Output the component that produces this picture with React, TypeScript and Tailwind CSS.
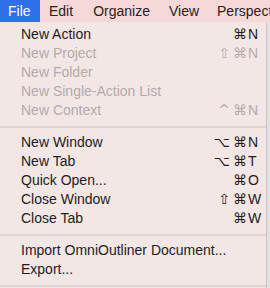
import React from "react";

type Item = { label: string; mods?: string[]; k?: string; disabled?: boolean } | "sep";

const items: Item[] = [
  { label: "New Action", mods: ["⌘"], k: "N" },
  { label: "New Project", mods: ["⇧", "⌘"], k: "N", disabled: true },
  { label: "New Folder", disabled: true },
  { label: "New Single-Action List", disabled: true },
  { label: "New Context", mods: ["^", "⌘"], k: "N", disabled: true },
  "sep",
  { label: "New Window", mods: ["⌥", "⌘"], k: "N" },
  { label: "New Tab", mods: ["⌥", "⌘"], k: "T" },
  { label: "Quick Open...", mods: ["⌘"], k: "O" },
  { label: "Close Window", mods: ["⇧", "⌘"], k: "W" },
  { label: "Close Tab", mods: ["⌘"], k: "W" },
  "sep",
  { label: "Import OmniOutliner Document..." },
  { label: "Export..." },
  "sep",
];

export default function App() {
  return (
    <div
      className="w-[270px] h-[288px] overflow-hidden bg-[#e9e6e6] flex flex-col"
      style={{ fontFamily: '"Liberation Sans", Arial, sans-serif' }}
    >
      <div className="h-[22px] shrink-0 bg-[#f7d8d8] flex items-center text-[14px] text-[#2a2222] overflow-hidden">
        <div className="h-[22px] w-[40px] shrink-0 bg-[#2f6fe9] text-white flex items-center pl-[8px]">File</div>
        <div className="pl-[9px] shrink-0">Edit</div>
        <div className="pl-[20px] shrink-0">Organize</div>
        <div className="pl-[19px] shrink-0">View</div>
        <div className="pl-[18px] shrink-0 whitespace-nowrap">Perspectives</div>
      </div>
      <div className="flex flex-1 min-h-0">
        <div className="w-[267px] shrink-0 bg-[#f3e7e6] border-r border-[#c9c2c2] pt-[3px] text-[14px]">
          {items.map((it, i) =>
            it === "sep" ? (
              <div key={i} className="h-[13px] flex items-center">
                <div className="w-full h-[2px] bg-[#dfd5d4]" />
              </div>
            ) : (
              <div
                key={i}
                className={`h-[19px] flex items-center pl-[21px] ${it.disabled ? "text-[#b3aaaa]" : "text-[#231c1c]"}`}
              >
                <span className="flex-1 whitespace-nowrap">{it.label}</span>
                <span
                  className="flex items-center justify-end gap-[3px] text-[14px]"
                  style={{ fontFamily: '"DejaVu Sans", "Liberation Sans", sans-serif' }}
                >
                  {(it.mods ?? []).map((m, j) => (
                    <span key={j}>{m}</span>
                  ))}
                </span>
                <span className="w-[19px] shrink-0 pl-[1px] text-[14px]">{it.k ?? ""}</span>
              </div>
            )
          )}
        </div>
        <div className="flex-1 bg-[#e4e1e1]" />
      </div>
    </div>
  );
}
